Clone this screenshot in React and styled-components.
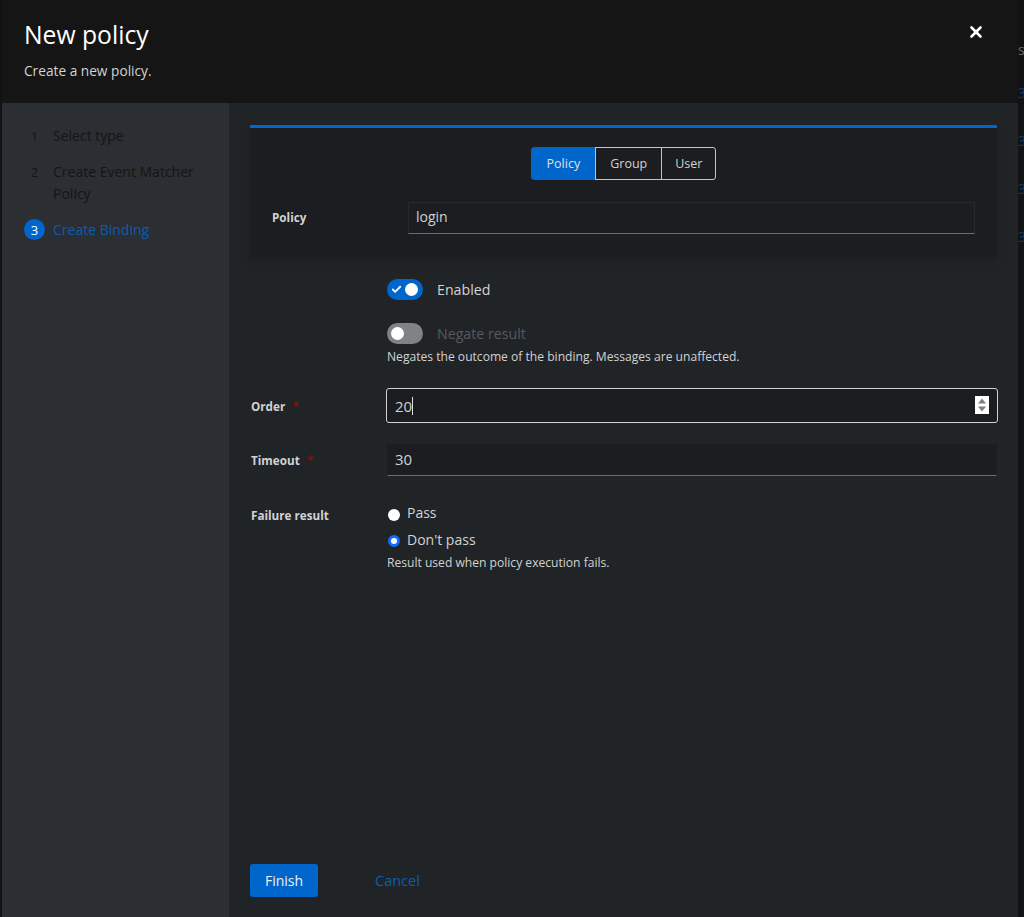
import React from "react";
import styled, { createGlobalStyle } from "styled-components";
import { Check, X } from "lucide-react";

const GlobalStyle = createGlobalStyle`
  html, body, #root {
    height: 100%;
  }
  body {
    margin: 0;
    background: #111213;
    font-family: "Open Sans", "Liberation Sans", sans-serif;
    color: #d2d2d2;
  }
  * {
    box-sizing: border-box;
  }
`;

const Page = styled.div`
  display: flex;
  height: 917px;
  padding-left: 2px;
  overflow: hidden;
`;

const Modal = styled.div`
  width: 1016px;
  display: flex;
  flex-direction: column;
`;

const Header = styled.header`
  height: 103px;
  flex: none;
  background: #151515;
  padding: 19px 22px 0;
  display: flex;
  justify-content: space-between;
  align-items: flex-start;
`;

const Title = styled.h1`
  margin: 0;
  font-size: 24.7px;
  line-height: 32px;
  font-weight: 400;
  color: #fff;
`;

const Subtitle = styled.p`
  margin: 10px 0 0;
  font-size: 13.7px;
  line-height: 20px;
  color: #d2d2d2;
`;

const CloseBtn = styled.button`
  background: none;
  border: none;
  padding: 0;
  margin: 4px 11px 0 0;
  color: #fff;
  display: flex;
  cursor: pointer;
`;

const Body = styled.div`
  flex: 1;
  display: flex;
  min-height: 0;
`;

const Sidebar = styled.nav`
  width: 227px;
  flex: none;
  background: #2b2e33;
  padding: 22px 22px 0;
`;

const Step = styled.div`
  display: flex;
  gap: 8px;
  margin-bottom: 14px;
  font-size: 14px;
  line-height: 22px;
  color: ${(p) => (p.$active ? "#0b5cb0" : "#151515")};
`;

const StepNum = styled.span`
  width: 21px;
  height: 21px;
  flex: none;
  border-radius: 50%;
  display: flex;
  align-items: center;
  justify-content: center;
  font-size: 13px;
  color: ${(p) => (p.$active ? "#fff" : "#151515")};
  background: ${(p) => (p.$active ? "#0066cc" : "transparent")};
`;

const Main = styled.main`
  flex: 1;
  display: flex;
  flex-direction: column;
  background: #212427;
  padding: 22px 21px 20px;
`;

const Card = styled.section`
  background: #1b1d21;
  border-top: 3px solid #0066cc;
  padding: 19px 22px 23px;
  box-shadow: 0 4px 12px rgba(3, 3, 3, 0.14);
`;

const ToggleGroup = styled.div`
  display: flex;
  justify-content: center;
  margin-bottom: 22px;
`;

const ToggleBtn = styled.button`
  height: 33px;
  padding: 0 ${(p) => p.$px || 14}px;
  font: inherit;
  font-size: 12.5px;
  color: ${(p) => (p.$on ? "#e0e0e0" : "#d2d2d2")};
  background: ${(p) => (p.$on ? "#0066cc" : "transparent")};
  border: 1px solid ${(p) => (p.$on ? "#0066cc" : "#c4c4c4")};
  margin-left: ${(p) => (p.$first ? 0 : -1)}px;
  border-radius: ${(p) => p.$radius || "0"};
`;

const PolicyRow = styled.div`
  display: grid;
  grid-template-columns: 136px 1fr;
  align-items: center;
`;

const Label = styled.label`
  font-size: 11.7px;
  font-weight: 700;
  color: #d2d2d2;
  display: flex;
  gap: 7px;
  margin-top: ${(p) => p.$mt || 0}px;
  margin-bottom: ${(p) => p.$mb || 0}px;
`;

const Required = styled.span`
  color: #a30000;
`;

const TextInput = styled.input`
  width: 100%;
  height: 32px;
  padding: 0 7px 3px;
  font: inherit;
  font-size: ${(p) => p.$size || 14}px;
  color: #d2d2d2;
  background: #1b1d21;
  border: 1px solid ${(p) => (p.$plain ? "#1b1d21" : "#26292d")};
  border-bottom-color: #6a6e73;
  outline: none;
`;

const Form = styled.div`
  display: flex;
  flex-direction: column;
  padding-left: 1px;
`;

const Row = styled.div`
  display: grid;
  grid-template-columns: 136px 1fr;
  align-items: ${(p) => p.$align || "center"};
  margin-top: ${(p) => p.$mt || 0}px;
`;

const SwitchRow = styled.div`
  display: flex;
  align-items: center;
  gap: 14px;
  font-size: 14.2px;
  color: ${(p) => (p.$off ? "#55595d" : "#d2d2d2")};
`;

const SwitchTrack = styled.span`
  width: 36px;
  height: 21px;
  border-radius: 11px;
  display: flex;
  align-items: center;
  justify-content: space-between;
  padding: 0 5px 0 4px;
  background: ${(p) => (p.$on ? "#0066cc" : "#808285")};
  color: #fff;
`;

const SwitchKnob = styled.span`
  width: 13px;
  height: 13px;
  border-radius: 50%;
  background: #fff;
`;

const Helper = styled.p`
  margin: ${(p) => p.$mt}px 0 0;
  font-size: 12.1px;
  line-height: 18px;
  color: #d2d2d2;
`;

const NumberBox = styled.div`
  position: relative;
  height: 35px;
  margin: 0 -1px;
  display: flex;
  align-items: center;
  padding: 0 8px;
  font-size: 15px;
  color: #d2d2d2;
  background: #1b1d21;
  border: 1px solid #d2d2d2;
  border-radius: 3px;
`;

const Caret = styled.span`
  width: 1px;
  height: 18px;
  background: #e0e0e0;
`;

const Spinner = styled.span`
  position: absolute;
  right: 8px;
  top: 7px;
  width: 14px;
  height: 18px;
  background: #fff;
  display: flex;
  align-items: center;
  justify-content: center;
`;

const RadioRow = styled.div`
  display: flex;
  align-items: center;
  gap: 7px;
  font-size: 14px;
  line-height: 20px;
  margin-bottom: 7px;
  color: #d2d2d2;
`;

const Radio = styled.span`
  width: 12px;
  height: 12px;
  margin: ${(p) => (p.$on ? 1 : 3)}px 0 0 1px;
  border-radius: 50%;
  background: #fff;
  border: ${(p) => (p.$on ? "3px solid #0d6efd" : "none")};
`;

const Footer = styled.footer`
  margin-top: auto;
  display: flex;
  align-items: center;
  gap: 57px;
`;

const FinishBtn = styled.button`
  height: 33px;
  width: 68px;
  font: inherit;
  font-size: 14px;
  color: #f0f0f0;
  background: #0066cc;
  border: none;
  border-radius: 3px;
  cursor: pointer;
`;

const CancelLink = styled.a`
  font-size: 14.5px;
  color: #0b5cb0;
  cursor: pointer;
`;

const BehindStrip = styled.div`
  width: 6px;
  flex: none;
  padding-top: 41px;
  overflow: hidden;
  white-space: nowrap;
  font-size: 14px;
  line-height: 48px;
  color: #0b3a6b;
`;

const BehindHead = styled.div`
  color: #666;
  line-height: 18px;
  margin-bottom: 10px;
`;

const steps = [
  { n: 1, label: "Select type" },
  { n: 2, label: "Create Event Matcher Policy" },
  { n: 3, label: "Create Binding", active: true },
];

const App = () => {
  return (
    <>
      <GlobalStyle />
      <Page>
        <Modal>
          <Header>
            <div>
              <Title>New policy</Title>
              <Subtitle>Create a new policy.</Subtitle>
            </div>
            <CloseBtn aria-label="Close">
              <X size={18} strokeWidth={3.5} />
            </CloseBtn>
          </Header>
          <Body>
            <Sidebar>
              {steps.map((s) => (
                <Step key={s.n} $active={s.active}>
                  <StepNum $active={s.active}>{s.n}</StepNum>
                  <span>{s.label}</span>
                </Step>
              ))}
            </Sidebar>
            <Main>
              <Card>
                <ToggleGroup>
                  <ToggleBtn $on $first $px={15} $radius="3px 0 0 3px">Policy</ToggleBtn>
                  <ToggleBtn>Group</ToggleBtn>
                  <ToggleBtn $px={13} $radius="0 3px 3px 0">User</ToggleBtn>
                </ToggleGroup>
                <PolicyRow>
                  <Label $mb={2}>Policy</Label>
                  <TextInput readOnly value="login" />
                </PolicyRow>
              </Card>
              <Form>
                <Row $mt={22}>
                  <span />
                  <SwitchRow>
                    <SwitchTrack $on>
                      <Check size={11} strokeWidth={4} />
                      <SwitchKnob />
                    </SwitchTrack>
                    Enabled
                  </SwitchRow>
                </Row>
                <Row $mt={23}>
                  <span />
                  <div>
                    <SwitchRow $off>
                      <SwitchTrack>
                        <SwitchKnob />
                      </SwitchTrack>
                      Negate result
                    </SwitchRow>
                    <Helper $mt={4}>Negates the outcome of the binding. Messages are unaffected.</Helper>
                  </div>
                </Row>
                <Row $mt={22}>
                  <Label>
                    Order <Required>*</Required>
                  </Label>
                  <NumberBox>
                    20
                    <Caret />
                    <Spinner>
                      <svg width="10" height="16" viewBox="0 0 10 16">
                        <path d="M5 1.5 9 6.5H1z" fill="#808080" />
                        <path d="M5 14.5 1 9.5h8z" fill="#808080" />
                      </svg>
                    </Spinner>
                  </NumberBox>
                </Row>
                <Row $mt={21}>
                  <Label>
                    Timeout <Required>*</Required>
                  </Label>
                  <TextInput readOnly $plain $size={15} value="30" />
                </Row>
                <Row $mt={27} $align="start">
                  <Label $mt={4}>Failure result</Label>
                  <div>
                    <RadioRow>
                      <Radio />
                      Pass
                    </RadioRow>
                    <RadioRow>
                      <Radio $on />
                      Don't pass
                    </RadioRow>
                    <Helper $mt={-3}>Result used when policy execution fails.</Helper>
                  </div>
                </Row>
              </Form>
              <Footer>
                <FinishBtn>Finish</FinishBtn>
                <CancelLink>Cancel</CancelLink>
              </Footer>
            </Main>
          </Body>
        </Modal>
        <BehindStrip>
          <BehindHead>s</BehindHead>
          <div>3</div>
          <div>3</div>
          <div>3</div>
          <div>3</div>
        </BehindStrip>
      </Page>
    </>
  );
};

export default App;
